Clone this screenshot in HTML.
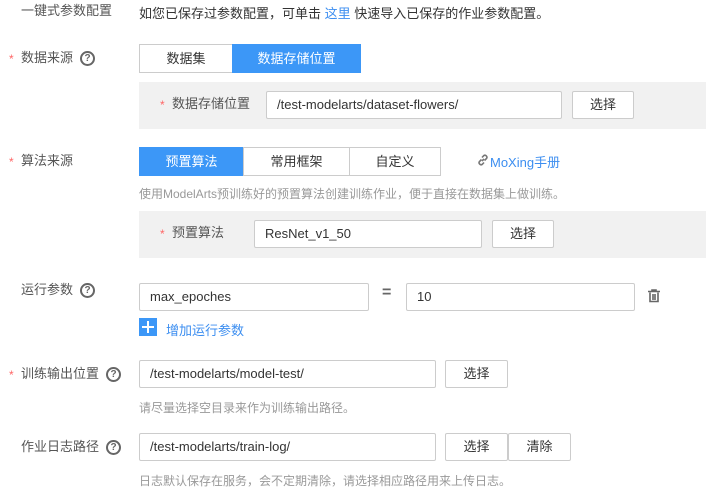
<!DOCTYPE html>
<html><head><meta charset="utf-8"><style>
*{box-sizing:border-box;margin:0;padding:0}
body{width:716px;height:489px;background:#fff;font-family:"Liberation Sans","Noto Sans CJK SC",sans-serif;font-size:13px;color:#333;position:relative;overflow:hidden}
.a{position:absolute;white-space:nowrap}
.lbl{color:#555;line-height:16px}
.star{color:#f66;font-size:12px}
.q{position:absolute;width:15px;height:15px;border:2px solid #666;border-radius:50%;font-size:10px;font-weight:bold;color:#666;text-align:center;line-height:11px}
.panel{position:absolute;background:#f1f1f1;left:139px;width:567px;height:47px}
.in{position:absolute;border:1px solid #ccc;background:#fff;border-radius:2px;height:28px;line-height:26px;padding-left:10px;color:#333}
.btn{position:absolute;border:1px solid #ccc;background:#fff;border-radius:2px;height:28px;line-height:26px;text-align:center;color:#333}
.tab{position:absolute;height:29px;line-height:27px;text-align:center;border:1px solid #ccc;background:#fff;color:#333}
.tab.on{background:#3c97f7;border-color:#3c97f7;color:#fff}
.hint{color:#999;font-size:12px}
.blue{color:#3c8ef0}
</style></head><body>
<div class="a lbl" style="left:21px;top:3px">一键式参数配置</div>
<div class="a" style="left:139px;top:3px">如您已保存过参数配置，可单击 <span class="blue">这里</span> 快速导入已保存的作业参数配置。</div>

<div class="a star" style="left:9px;top:52px">*</div>
<div class="a lbl" style="left:21px;top:50px">数据来源</div>
<div class="q" style="left:80px;top:51px">?</div>
<div class="tab" style="left:139px;top:44px;width:94px">数据集</div>
<div class="tab on" style="left:232px;top:44px;width:129px">数据存储位置</div>
<div class="panel" style="top:82px"></div>
<div class="a star" style="left:160px;top:98px">*</div>
<div class="a lbl" style="left:172px;top:96px">数据存储位置</div>
<div class="in" style="left:266px;top:91px;width:296px">/test-modelarts/dataset-flowers/</div>
<div class="btn" style="left:572px;top:91px;width:62px">选择</div>

<div class="a star" style="left:9px;top:155px">*</div>
<div class="a lbl" style="left:21px;top:153px">算法来源</div>
<div class="tab on" style="left:139px;top:147px;width:105px">预置算法</div>
<div class="tab" style="left:243px;top:147px;width:107px">常用框架</div>
<div class="tab" style="left:349px;top:147px;width:92px">自定义</div>
<svg class="a" style="left:477px;top:154px" width="12" height="12" viewBox="0 0 12 12"><path d="M5 7L7 5M4.5 5.5L2.5 7.5a2 2 0 0 0 2.8 2.8L7 8.5M7.5 6.5L9.5 4.5a2 2 0 0 0-2.8-2.8L5 3.5" stroke="#777" stroke-width="1.6" fill="none"/></svg>
<div class="a blue" style="left:490px;top:152px">MoXing手册</div>
<div class="a hint" style="left:139px;top:185px">使用ModelArts预训练好的预置算法创建训练作业，便于直接在数据集上做训练。</div>
<div class="panel" style="top:211px"></div>
<div class="a star" style="left:160px;top:227px">*</div>
<div class="a lbl" style="left:172px;top:225px">预置算法</div>
<div class="in" style="left:254px;top:220px;width:228px">ResNet_v1_50</div>
<div class="btn" style="left:492px;top:220px;width:62px">选择</div>

<div class="a lbl" style="left:21px;top:282px">运行参数</div>
<div class="q" style="left:80px;top:283px">?</div>
<div class="in" style="left:139px;top:283px;width:230px">max_epoches</div>
<div class="a" style="left:382px;top:284px;font-size:16px;color:#666;font-weight:bold">=</div>
<div class="in" style="left:406px;top:283px;width:229px">10</div>
<svg class="a" style="left:647px;top:289px" width="14" height="14" viewBox="0 0 14 14"><path d="M1 2.5h12M5 2.5V1h4v1.5M3 3.5v9h8v-9M6 5v6M8 5v6" stroke="#666" stroke-width="1.6" fill="none"/></svg>
<div class="a" style="left:139px;top:318px;width:18px;height:18px;background:#3c97f7"><div style="position:absolute;left:3px;top:8px;width:12px;height:2px;background:#fff"></div><div style="position:absolute;left:8px;top:3px;width:2px;height:12px;background:#fff"></div></div>
<div class="a blue" style="left:166px;top:320px">增加运行参数</div>

<div class="a star" style="left:9px;top:368px">*</div>
<div class="a lbl" style="left:21px;top:366px">训练输出位置</div>
<div class="q" style="left:106px;top:367px">?</div>
<div class="in" style="left:139px;top:360px;width:297px">/test-modelarts/model-test/</div>
<div class="btn" style="left:445px;top:360px;width:63px">选择</div>
<div class="a hint" style="left:139px;top:399px">请尽量选择空目录来作为训练输出路径。</div>

<div class="a lbl" style="left:21px;top:439px">作业日志路径</div>
<div class="q" style="left:106px;top:440px">?</div>
<div class="in" style="left:139px;top:433px;width:297px">/test-modelarts/train-log/</div>
<div class="btn" style="left:445px;top:433px;width:63px">选择</div>
<div class="btn" style="left:508px;top:433px;width:63px">清除</div>
<div class="a hint" style="left:139px;top:472px">日志默认保存在服务，会不定期清除，请选择相应路径用来上传日志。</div>
</body></html>
